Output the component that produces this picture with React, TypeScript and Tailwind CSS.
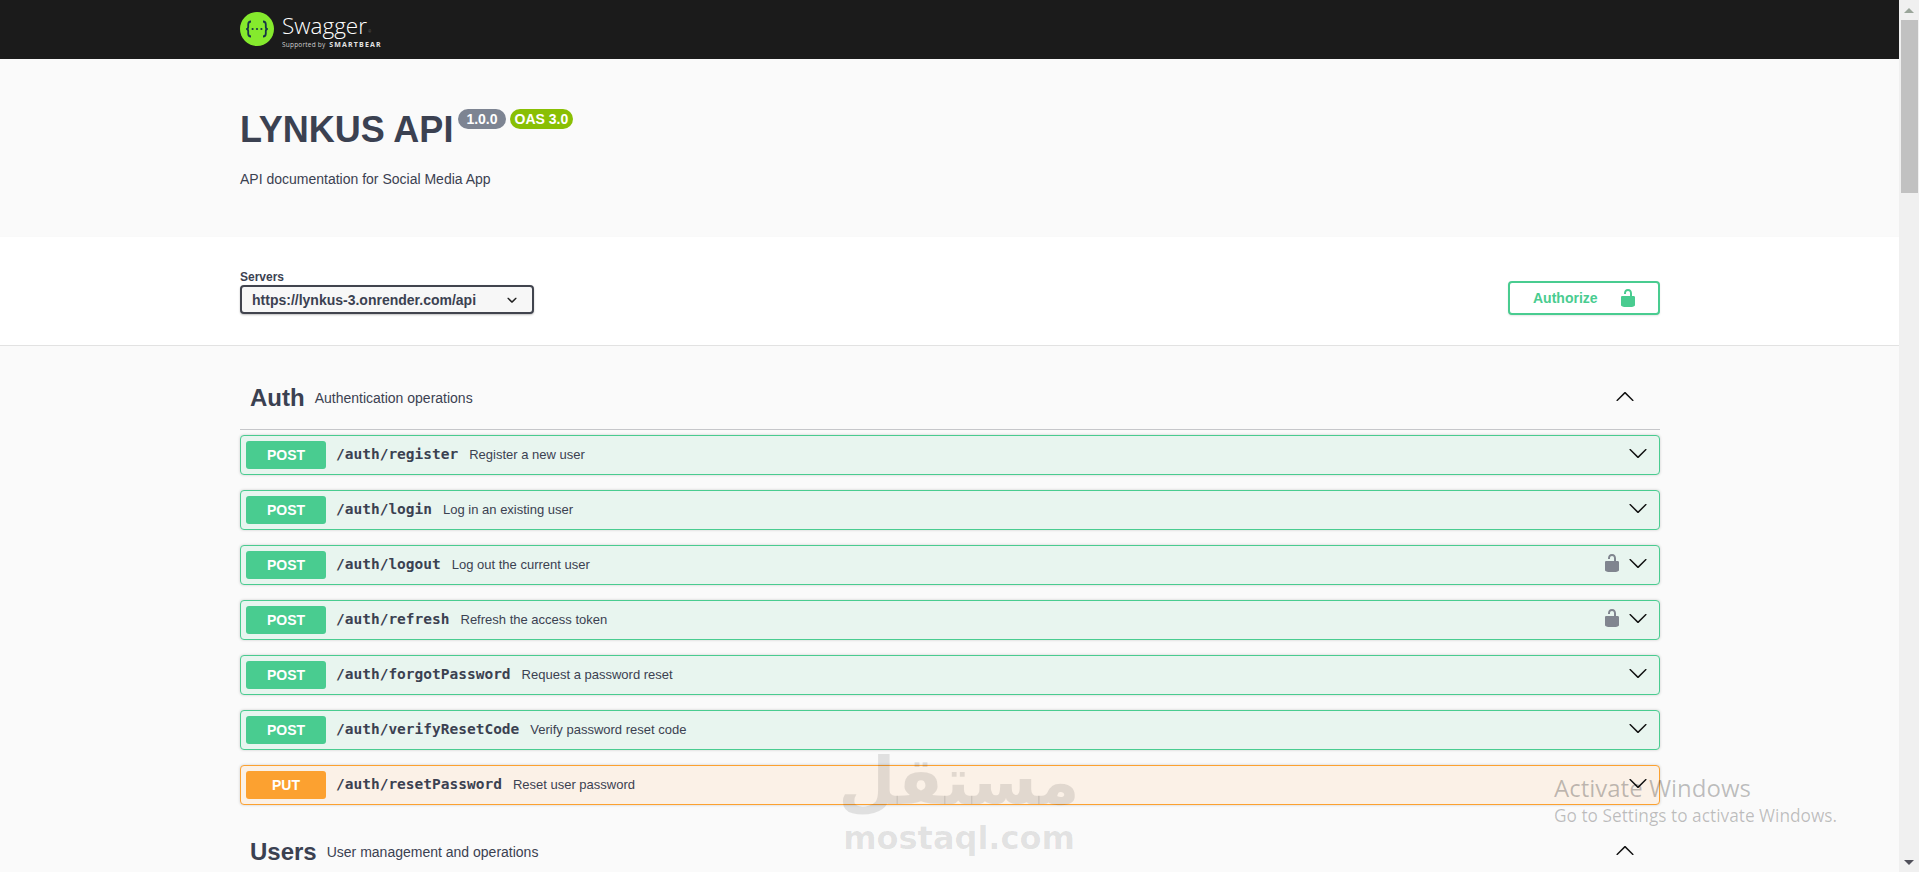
const sans = "font-['Liberation_Sans',Arial,sans-serif]";

function Arrow({ up = false }: { up?: boolean }) {
  return (
    <svg viewBox="0 0 20 20" width="20" height="20" className={up ? "rotate-180 shrink-0" : "shrink-0"} fill="#111">
      <path d="M17.418 6.109c.272-.268.709-.268.979 0s.271.701 0 .969l-7.908 7.83c-.27.268-.707.268-.979 0l-7.908-7.83c-.27-.268-.27-.701 0-.969.271-.268.709-.268.979 0L10 13.25l7.418-7.141z" />
    </svg>
  );
}

function Lock({ color }: { color: string }) {
  return (
    <svg viewBox="0 0 20 20" width="20" height="20" fill={color} className="shrink-0">
      <path d="M15.8 8H14V5.6C14 2.703 12.665 1 10 1 7.334 1 6 2.703 6 5.6V6h2v-.801C8 3.754 8.797 3 10 3c1.203 0 2 .754 2 2.199V8H4c-.553 0-1 .646-1 1.199V17c0 .549.428 1.139.951 1.307l1.197.387C5.672 18.861 6.55 19 7.1 19h5.8c.549 0 1.428-.139 1.951-.307l1.196-.387c.524-.167.953-.757.953-1.306V9.199C17 8.646 16.352 8 15.8 8z" />
    </svg>
  );
}

function Row({ method, path, desc, locked = false }: { method: "POST" | "PUT"; path: string; desc: string; locked?: boolean }) {
  const post = method === "POST";
  return (
    <div
      className={
        "flex h-10 items-center rounded-[4px] border pl-[5px] pr-[11px] shadow-[0_0_3px_rgba(0,0,0,0.19)] " +
        (post ? "border-[#49cc90] bg-[#e8f5ef]" : "border-[#fca130] bg-[#fbf1e7]")
      }
    >
      <span
        className={
          "flex h-7 w-20 items-center justify-center rounded-[3px] text-sm font-bold text-white " +
          (post ? "bg-[#49cc90]" : "bg-[#fca130]")
        }
      >
        {method}
      </span>
      <span className="ml-[10px] font-['DejaVu_Sans_Mono',monospace] text-[14.5px] font-bold text-[#3b4151]">{path}</span>
      <span className="ml-[11px] text-[13px] text-[#3b4151]">{desc}</span>
      <div className="ml-auto flex items-center gap-[6px] pb-[5px]">
        {locked && <Lock color="#80858f" />}
        <Arrow />
      </div>
    </div>
  );
}

function SectionHead({ name, desc }: { name: string; desc: string }) {
  return (
    <div className="flex h-[64px] shrink-0 items-center border-b border-[#c6c7ca] pl-[10px] pr-[25px]">
      <span className="text-2xl font-bold text-[#3b4151]">{name}</span>
      <span className="ml-[10px] text-sm text-[#3b4151]">{desc}</span>
      <div className="ml-auto pb-[2px]">
        <Arrow up />
      </div>
    </div>
  );
}

const rows = [
  { method: "POST" as const, path: "/auth/register", desc: "Register a new user" },
  { method: "POST" as const, path: "/auth/login", desc: "Log in an existing user" },
  { method: "POST" as const, path: "/auth/logout", desc: "Log out the current user", locked: true },
  { method: "POST" as const, path: "/auth/refresh", desc: "Refresh the access token", locked: true },
  { method: "POST" as const, path: "/auth/forgotPassword", desc: "Request a password reset" },
  { method: "POST" as const, path: "/auth/verifyResetCode", desc: "Verify password reset code" },
  { method: "PUT" as const, path: "/auth/resetPassword", desc: "Reset user password" },
];

export default function App() {
  return (
    <div className={"relative flex h-[872px] w-full overflow-hidden bg-white " + sans}>
      <div className="flex min-w-0 flex-1 flex-col">
        {/* Top bar */}
        <header className="flex h-[59px] shrink-0 items-center bg-[#1b1b1b] pl-[240px]">
          <svg viewBox="0 0 34 34" width="34" height="34" className="mb-[1px] shrink-0">
            <circle cx="17" cy="17" r="17" fill="#85ea2d" />
            <path d="M11 9.5c-2.6 0-2.8 1.4-2.8 3v2.4c0 1.2-.7 2.1-2 2.1 1.3 0 2 .9 2 2.1v2.4c0 1.6.2 3 2.8 3" fill="none" stroke="#173647" strokeWidth="1.8" />
            <path d="M23 9.5c2.6 0 2.8 1.4 2.8 3v2.4c0 1.2.7 2.1 2 2.1 -1.3 0-2 .9-2 2.1v2.4c0 1.6-.2 3-2.8 3" fill="none" stroke="#173647" strokeWidth="1.8" />
            <circle cx="12.6" cy="17" r="1.1" fill="#173647" />
            <circle cx="17" cy="17" r="1.1" fill="#173647" />
            <circle cx="21.4" cy="17" r="1.1" fill="#173647" />
          </svg>
          <div className="ml-2 flex flex-col pt-[4px] text-white">
            <div className="flex items-end font-['Open_Sans',sans-serif] text-[22.5px] font-light leading-[26px]">
              Swagger<span className="mb-[5px] ml-[1px] text-[4px] leading-[4px] text-[#999]">®</span>
            </div>
            <div className="mt-[1px] flex items-center leading-[10px]">
              <span className="font-['Open_Sans',sans-serif] text-[6.5px] tracking-[0.2px] text-[#cfcfcf]">Supported by</span>
              <span className="ml-[4px] font-['Open_Sans',sans-serif] text-[7px] font-bold tracking-[1.15px] text-[#e4e4e4]">SMARTBEAR</span>
            </div>
          </div>
        </header>

        {/* Info */}
        <section className="h-[178px] shrink-0 bg-[#fafafa] pl-[240px] pt-[49px]">
          <div className="flex items-start">
            <h1 className="mt-[1px] text-[36px] leading-[41px] font-bold text-[#3b4151]">LYNKUS API</h1>
            <span className="ml-[5px] mt-[1px] flex h-5 items-center rounded-[10px] bg-[#7d8492] px-[8px] text-sm font-bold text-white">1.0.0</span>
            <span className="ml-[4px] mt-[1px] flex h-5 items-center rounded-[10px] bg-[#89bf04] px-[5px] text-sm font-bold text-white">OAS 3.0</span>
          </div>
          <p className="mt-[21px] text-sm leading-4 text-[#3b4151]">API documentation for Social Media App</p>
        </section>

        {/* Servers */}
        <section className="flex h-[109px] shrink-0 items-end justify-between border-b border-[#e2e2e2] bg-white pb-[30px] pl-[240px] pr-[239px] shadow-[0_1px_2px_rgba(0,0,0,0.08)]">
          <div className="mb-[1px] flex flex-col">
            <span className="text-xs font-bold leading-[15px] text-[#3b4151]">Servers</span>
            <div className="flex h-[29px] w-[294px] items-center rounded-[4px] border-2 border-[#41444e] bg-[#f7f7f7] pl-[10px] pr-[10px] shadow-[0_1px_2px_rgba(0,0,0,0.25)]">
              <span className="text-sm font-bold text-[#3b4151]">https://lynkus-3.onrender.com/api</span>
              <svg viewBox="0 0 20 20" width="20" height="20" fill="#222" className="ml-auto">
                <path d="M13.418 7.859c.271-.268.709-.268.978 0 .27.268.272.701 0 .969l-3.908 3.83c-.27.268-.707.268-.979 0l-3.908-3.83c-.27-.268-.27-.701 0-.969.271-.268.709-.268.978 0L10 11l3.418-3.141z" />
              </svg>
            </div>
          </div>
          <button className="flex h-[34px] w-[152px] items-center rounded-[4px] border-2 border-[#49cc90] bg-white pl-[23px] text-sm font-bold text-[#49cc90] shadow-[0_1px_2px_rgba(0,0,0,0.1)]">
            Authorize
            <span className="ml-[20px]">
              <Lock color="#49cc90" />
            </span>
          </button>
        </section>

        {/* Operations */}
        <main className="flex min-h-0 flex-1 flex-col overflow-hidden bg-[#fafafa] pl-[240px] pr-[239px] pt-[20px]">
          <SectionHead name="Auth" desc="Authentication operations" />
          <div className="mt-[5px] flex shrink-0 flex-col gap-[15px]">
            {rows.map((r) => (
              <Row key={r.path} {...r} />
            ))}
          </div>
          <div className="mt-[15px]">
            <SectionHead name="Users" desc="User management and operations" />
          </div>
        </main>
      </div>

      {/* Scrollbar */}
      <aside className="flex w-5 shrink-0 flex-col items-center bg-[#f0f0f0]">
        <div className="flex h-5 w-full items-center justify-center">
          <div className="h-0 w-0 border-x-[5px] border-b-[5px] border-x-transparent border-b-[#9aa59a]" />
        </div>
        <div className="ml-[1px] h-[173px] w-[17px] bg-[#c1c1c1]" />
        <div className="flex-1" />
        <div className="flex h-5 w-full items-center justify-center">
          <div className="h-0 w-0 border-x-[5px] border-t-[5px] border-x-transparent border-t-[#50505a]" />
        </div>
      </aside>

      {/* Watermark */}
      <div className="pointer-events-none absolute left-[845px] top-[743px] flex w-[228px] flex-col items-center text-black/10">
        <span dir="rtl" lang="ar" className="font-['DejaVu_Sans',sans-serif] text-[66px] leading-[78px] font-bold">مستقل</span>
        <span className="font-['DejaVu_Sans',sans-serif] text-[32px] leading-[34px] font-bold">mostaql.com</span>
      </div>

      {/* Activation notice */}
      <div className="pointer-events-none absolute left-[1554px] top-[771px] flex flex-col font-['Open_Sans',sans-serif] text-black/25">
        <span className="text-[24px] leading-[33px]">Activate Windows</span>
        <span className="text-[17.3px] leading-[23px]">Go to Settings to activate Windows.</span>
      </div>
    </div>
  );
}
